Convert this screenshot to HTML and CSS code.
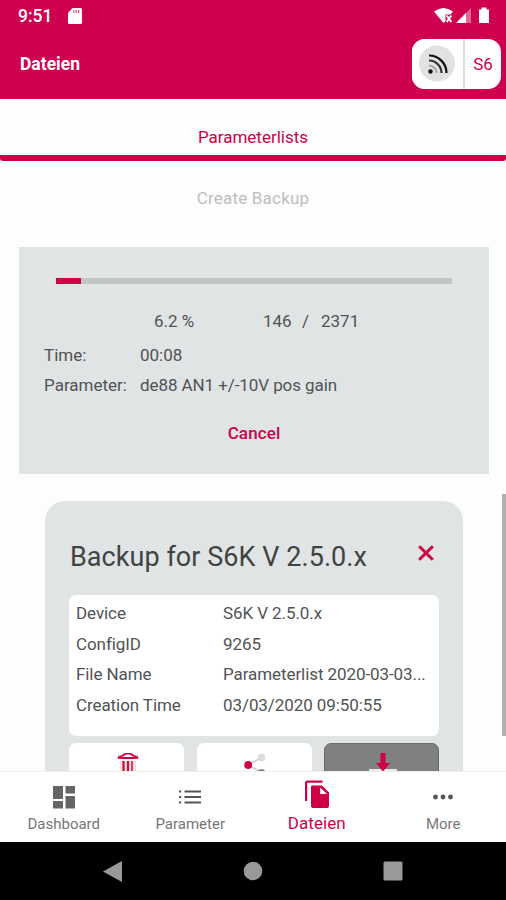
FILE: index.html
```html
<!DOCTYPE html>
<html lang="de">
<head>
<meta charset="utf-8">
<meta name="viewport" content="width=device-width, initial-scale=1">
<title>Dateien</title>
<link rel="stylesheet" href="styles.css">
</head>
<body>
<div class="screen">
  <header class="header">
    <div class="status">
      <span class="clock">9:51</span>
      <svg class="sd" width="14" height="16" viewBox="0 0 14 16"><path fill="#fff" d="M4.500 0H12.500Q14 0 14 1.500V14.500Q14 16 12.500 16H1.500Q0 16 0 14.500V5Z"/><path stroke="#cf004f" stroke-opacity=".7" stroke-width="1.200" d="M5.800 2V5M8.200 2V5M10.600 2V5"/></svg>
      <svg class="signals" width="56" height="18" viewBox="0 0 56 18"><path fill="#fff" d="M0 4.500Q9.500-2.500 19 4.500L16.500 7.500H11.500V14L9.500 16Z"/><path fill="none" stroke="#fff" stroke-width="2" d="M12.700 8.500L17.300 15M17.300 8.500L12.700 15"/><path fill="#fff" fill-opacity=".4" d="M37 1V16H29V9Z"/><path fill="#fff" d="M32 6V16H22Z"/><path fill="#fff" d="M47.500 .5H52.500V2.500H55V16H45V2.500H47.500Z"/></svg>
    </div>
    <div class="titlebar">
      <h1 class="title">Dateien</h1>
      <div class="device">
        <span class="rss"><svg width="20" height="20" viewBox="0 0 20 20" fill="none"><circle cx="2.500" cy="17.500" r="2.200" fill="#111"/><path stroke="#aaa" stroke-width="2.200" d="M1 11.500A7.500 7.500 0 0 1 8.500 19"/><path stroke="#333" stroke-width="2.200" d="M1 6.500A12.500 12.500 0 0 1 13.500 19"/><path stroke="#111" stroke-width="2.200" d="M1 1.500A17.500 17.500 0 0 1 18.500 19"/></svg></span>
        <span class="device-name">S6</span>
      </div>
    </div>
  </header>

  <main class="content">
    <div class="tab">Parameterlists</div>
    <div class="create">Create Backup</div>
    <section class="progress">
      <div class="bar"><div class="fill" style="width:6.2%"></div></div>
      <div class="counts"><span class="percent">6.2 %</span><span class="done">146</span><span class="slash">/</span><span class="total">2371</span></div>
      <dl class="facts">
        <dt>Time:</dt><dd>00:08</dd>
        <dt>Parameter:</dt><dd class="gain">de88 AN1 +/-10V pos gain</dd>
      </dl>
      <button class="cancel">Cancel</button>
    </section>

    <section class="backup">
      <div class="backup-head">
        <h2 class="backup-title">Backup for S6K V 2.5.0.x</h2>
        <svg class="close" width="16" height="16" viewBox="0 0 16 16"><path fill="none" stroke="#cf0045" stroke-width="3" d="M1.200 1.200L14.800 14.800M14.800 1.200L1.200 14.800"/></svg>
      </div>
      <dl class="details">
        <dt>Device</dt><dd>S6K V 2.5.0.x</dd>
        <dt>ConfigID</dt><dd>9265</dd>
        <dt>File Name</dt><dd>Parameterlist 2020-03-03...</dd>
        <dt>Creation Time</dt><dd>03/03/2020 09:50:55</dd>
      </dl>
      <div class="actions">
        <button class="action" aria-label="Löschen"><svg width="22" height="30" viewBox="0 0 22 30"><path fill="none" stroke="#cf0045" stroke-width="1.800" d="M1.500 5.500V4.800Q1.500 3.500 5 3.200Q11-2.500 17 3.200Q20.500 3.500 20.500 4.800V5.500M1 5H21"/><path fill="#eedfe1" d="M3 8H19V30H3Z"/><path stroke="#d30c35" stroke-width="2.200" d="M6.500 8V30M11 8V30"/><path stroke="#d30c35" stroke-width="1.500" d="M15 8V30"/></svg></button>
        <button class="action" aria-label="Teilen"><svg width="22" height="30" viewBox="0 0 22 30"><path fill="none" stroke="#c8c8c8" stroke-width="1.500" d="M17 5L4 12L17 19"/><circle cx="17.500" cy="4.500" r="3.800" fill="#ddd"/><circle cx="4.200" cy="12" r="3.900" fill="#cf0045"/><circle cx="17.500" cy="20" r="3.900" fill="#888"/></svg></button>
        <button class="action dark" aria-label="Laden"><svg width="28" height="30" viewBox="0 0 28 30"><path fill="#e8e8e8" d="M0 16H28V30H0Z"/><path fill="#cf0045" d="M11.500 0H16.500V10H21L14 18.500L7 10H11.500Z"/></svg></button>
      </div>
    </section>
    <div class="scroll"></div>
  </main>

  <nav class="tabs">
    <a class="item"><svg width="24" height="24" viewBox="0 0 24 24" fill="#656565"><path d="M1 1H11V14H1ZM13.500 1H23V8.500H13.500ZM13.500 11H23V23.500H13.500ZM1 16H11V23.500H1Z"/></svg><span>Dashboard</span></a>
    <a class="item"><svg width="24" height="24" viewBox="0 0 24 24" fill="none" stroke="#555" stroke-width="2"><path d="M6.500 6.500H23M6.500 12H23M6.500 17.500H23M1 6.500H3.200M1 12H3.200M1 17.500H3.200"/></svg><span>Parameter</span></a>
    <a class="item active"><svg width="26" height="28" viewBox="0 0 26 28"><path fill="none" stroke="#cf0045" stroke-width="2.200" d="M18.500 1.600H3.500Q2.100 1.600 2.100 3V21"/><path fill="#cf0045" fill-rule="evenodd" d="M8 5.500H18L25 12.500V26Q25 28 23 28H9Q7 28 7 26V6.500Q7 5.500 8 5.500ZM16.200 7.500V14H23Z"/></svg><span>Dateien</span></a>
    <a class="item"><svg width="24" height="24" viewBox="0 0 24 24" fill="#555"><circle cx="4.500" cy="12" r="2.400"/><circle cx="12" cy="12" r="2.400"/><circle cx="19.500" cy="12" r="2.400"/></svg><span>More</span></a>
  </nav>
  <div class="system">
    <svg width="20" height="21" viewBox="0 0 20 21"><path fill="#999" d="M0 10.500L18 0.500Q19 0 19 1V20Q19 21 18 20.500Z"/></svg>
    <svg width="20" height="20" viewBox="0 0 20 20"><circle cx="10" cy="10" r="9.300" fill="#999"/></svg>
    <svg width="20" height="20" viewBox="0 0 20 20"><rect x=".5" y=".5" width="19" height="19" rx="1.500" fill="#999"/></svg>
  </div>
</div>
</body>
</html>
```
FILE: styles.css
```css
* { box-sizing: border-box; }
body { margin: 0; font-family: Roboto, "Liberation Sans", sans-serif; color: #505354; }
h1, h2, dl, dd { margin: 0; }
button { border: 0; padding: 0; font: inherit; }
svg { display: block; flex: none; }
.screen { width: 506px; height: 900px; display: flex; flex-direction: column; overflow: hidden; background: #fdfdfd; font-size: 17px; line-height: 20px; }

.header { flex: none; height: 98.500px; background: #cf004f; color: #fff; }
.status { height: 32px; padding: 0 16px 0 18px; display: flex; align-items: center; }
.clock { font-size: 17.500px; font-weight: 500; width: 50px; }
.sd { margin-bottom: 1px; }
.signals { margin-left: auto; }
.titlebar { height: 64px; padding: 0 5px 0 20px; display: flex; align-items: center; justify-content: space-between; }
.title { font-size: 17.500px; font-weight: 700; }
.device { display: flex; width: 89px; height: 50px; border-radius: 13px; background: #fff; overflow: hidden; }
.rss { width: 53px; display: flex; align-items: center; justify-content: center; border-right: 2px solid #dedede; background: radial-gradient(circle at 25px 24.500px, #e2e2e2 17.500px, #fff 18.500px); }
.device-name { flex: 1; display: flex; align-items: center; justify-content: center; color: #cf0045; font-size: 17px; }

.content { position: relative; flex: none; height: 672.500px; overflow: hidden; }
.tab { height: 62.500px; padding-top: 28.500px; text-align: center; color: #cf0045; border-bottom: 6px solid #cf0045; border-radius: 3px; }
.create { height: 86px; padding-top: 27px; text-align: center; color: #bdbebf; letter-spacing: .2px; }
.progress { width: 470px; height: 227px; margin-left: 19px; padding: 31px 25px 0; background: #e0e4e5; display: flex; flex-direction: column; }
.bar { flex: none; width: 396px; height: 6px; margin-left: 12px; background: #bfc4c5; }
.fill { height: 100%; background: #cf0045; }
.counts { display: flex; margin-top: 27px; padding-left: 110px; }
.percent { width: 109px; }
.done { width: 39px; }
.slash { width: 19px; }
.facts { display: grid; grid-template-columns: 96px 1fr; row-gap: 10px; margin-top: 14px; white-space: nowrap; }
.gain { letter-spacing: -.08px; }
.cancel { align-self: center; margin-top: 28px; background: none; color: #cf0045; font-weight: 500; line-height: 20px; letter-spacing: .1px; }

.backup { width: 418px; height: 340px; margin: 27px 0 0 45px; padding: 0 24px; border-radius: 20px; background: #e0e4e5; }
.backup-head { height: 93.500px; display: flex; align-items: flex-start; justify-content: space-between; padding: 40px 5px 0 1px; }
.backup-title { font-size: 27px; line-height: 32px; font-weight: 400; color: #404344; white-space: nowrap; letter-spacing: .05px; }
.close { margin-top: 4px; }
.details { width: 370px; height: 141px; padding: 8.500px 0 0 7px; border-radius: 7px; background: #fff; display: grid; grid-template-columns: 147px 1fr; grid-template-rows: repeat(4, 20px); row-gap: 10.500px; align-content: start; white-space: nowrap; letter-spacing: -.08px; }
.actions { display: flex; gap: 12.500px; margin-top: 7.500px; }
.action { width: 115px; height: 55px; padding-top: 10px; border-radius: 7px; background: #fff; display: flex; justify-content: center; align-items: flex-start; }
.action svg { margin-left: 2px; }
.dark { background: #808080; border: 1px solid #6b6b6b; padding-top: 9px; }
.scroll { position: absolute; right: 0; top: 395.500px; width: 4px; height: 242px; background: #afafaf; }

.tabs { flex: none; height: 71px; display: grid; grid-template-columns: repeat(4, 1fr); background: #fff; border-top: 1px solid #eee; font-size: 15px; color: #777; }
.item { display: flex; flex-direction: column; align-items: center; padding-top: 13px; }
.item svg { margin-left: 1px; }
.item span { margin-top: 5px; margin-left: 1px; }
.item.active { padding-top: 8px; color: #cf0045; font-size: 17px; letter-spacing: .1px; }
.system { flex: 1; background: #000; display: flex; justify-content: space-between; align-items: center; padding: 0 103px; }
```
